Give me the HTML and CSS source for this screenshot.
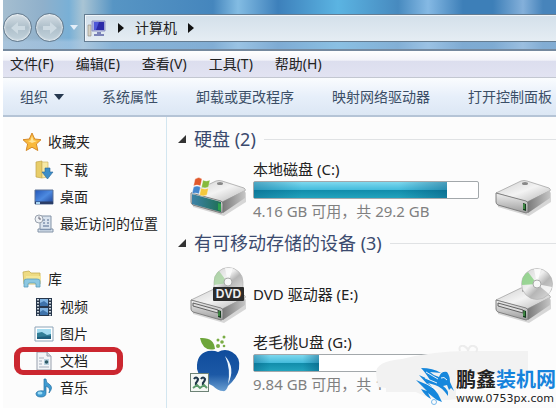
FILE: index.html
```html
<!DOCTYPE html>
<html lang="zh-CN">
<head>
  <meta charset="UTF-8">
  <meta name="viewport" content="width=device-width, initial-scale=1.0">
  <title>计算机</title>
  <link rel="stylesheet" href="styles.css">
</head>
<body>
  <!-- Shared shapes -->
  <svg class="defs" aria-hidden="true">
    <defs>
      <linearGradient id="metalTop" x1="0" y1="0" x2="1" y2="1">
        <stop offset="0" stop-color="#cfcfcf"/>
        <stop offset="0.5" stop-color="#f3f3f3"/>
        <stop offset="1" stop-color="#b5b5b5"/>
      </linearGradient>
      <linearGradient id="metalSide" x1="0" y1="0" x2="1" y2="0">
        <stop offset="0" stop-color="#777"/>
        <stop offset="1" stop-color="#c4c4c4"/>
      </linearGradient>
      <linearGradient id="metalFront" x1="0" y1="0" x2="0" y2="1">
        <stop offset="0" stop-color="#f1f1f1"/>
        <stop offset="1" stop-color="#9c9c9c"/>
      </linearGradient>
      <linearGradient id="tealFront" x1="0" y1="0" x2="1" y2="0">
        <stop offset="0" stop-color="#3c82a8"/>
        <stop offset="1" stop-color="#1f6f55"/>
      </linearGradient>
      <linearGradient id="disc" x1="0" y1="0" x2="1" y2="1">
        <stop offset="0" stop-color="#d0d0d0"/>
        <stop offset="0.4" stop-color="#f0f0f0"/>
        <stop offset="0.6" stop-color="#b6b6b6"/>
        <stop offset="1" stop-color="#e0e0e0"/>
      </linearGradient>
      <linearGradient id="peach" x1="0" y1="0" x2="0" y2="1">
        <stop offset="0" stop-color="#0f4c9c"/>
        <stop offset="0.6" stop-color="#1c59a6"/>
        <stop offset="1" stop-color="#6a9fd2"/>
      </linearGradient>
      <linearGradient id="screen" x1="0" y1="0" x2="1" y2="1">
        <stop offset="0" stop-color="#2457b8"/>
        <stop offset="0.5" stop-color="#4d8ae0"/>
        <stop offset="1" stop-color="#1c3f92"/>
      </linearGradient>
      <g id="drive">
        <path d="M2 19L3 30L34 39L56 25V15L34 30Z" fill="#000" opacity="0.15"/>
        <path d="M1 16L26 4Q29 3 32 4L54 11Q56 12 55 14L32 25Z" fill="url(#metalTop)" stroke="#a6a6a6" stroke-width="0.8"/>
        <path d="M32 25L55 13V21L33 36Z" fill="url(#metalSide)"/>
        <path d="M1 16L31 24Q33 25 33 27V34Q33 36 31 36L3 28Q1 27 1 25Z" fill="url(#metalFront)" stroke="#777" stroke-width="0.9"/>
        <ellipse cx="30" cy="6.500" rx="3" ry="1.500" fill="#888"/>
        <path d="M28 26L31 27V34L28 33Z" fill="#163d1e"/>
        <path d="M29 27V32" stroke="#63cf65"/>
      </g>
    </defs>
  </svg>

  <div class="window">
    <header class="address-row">
      <button class="nav-btn" aria-label="后退">
        <svg width="18" height="18" viewBox="0 0 18 18"><path d="M2 9L9 3V7H16V11H9V15Z"/></svg>
      </button>
      <button class="nav-btn" aria-label="前进">
        <svg width="18" height="18" viewBox="0 0 18 18"><path d="M16 9L9 3V7H2V11H9V15Z"/></svg>
      </button>
      <button class="history-btn" aria-label="最近浏览">
        <svg width="8" height="5" viewBox="0 0 8 5"><path d="M0 0H8L4 5Z" fill="#e4eef8"/></svg>
      </button>
      <nav class="address">
        <svg width="20" height="20" viewBox="0 0 20 20">
          <path d="M1 7H4V18H1Z" fill="#d6d2c4" stroke="#8d8a80" stroke-width="0.6"/>
          <path d="M5 3H18V13H5Z" fill="#a9aee0" stroke="#8f93c4"/>
          <path d="M7 4H17V12H7Z" fill="#2b2aa8"/>
          <path d="M7 4H12L9 12H7Z" fill="#4f57d8"/>
          <path d="M10 14H14V16H17V18H7V16H10Z" fill="#7b83b8"/>
        </svg>
        <svg width="6" height="10" viewBox="0 0 6 10"><path d="M0 0L6 5L0 10Z" fill="#111"/></svg>
        <a href="#">计算机</a>
        <svg width="6" height="10" viewBox="0 0 6 10"><path d="M0 0L6 5L0 10Z" fill="#111"/></svg>
      </nav>
    </header>

    <div class="menubar">
      <button>文件(F)</button>
      <button>编辑(E)</button>
      <button>查看(V)</button>
      <button>工具(T)</button>
      <button>帮助(H)</button>
    </div>

    <div class="toolbar">
      <button>组织 <svg width="10" height="6" viewBox="0 0 10 6"><path d="M0 0H10L5 6Z" fill="#26384f"/></svg></button>
      <button>系统属性</button>
      <button>卸载或更改程序</button>
      <button>映射网络驱动器</button>
      <button>打开控制面板</button>
    </div>

    <div class="body">
      <nav class="sidebar">
        <div class="group">
          <a class="group-title" href="#">
            <svg width="20" height="20" viewBox="0 0 20 20"><path d="M10 1L12.700 7L19 7.700L14.400 12L15.800 18.500L10 15.200L4.200 18.500L5.600 12L1 7.700L7.300 7Z" fill="#f9b93c" stroke="#d58a2a"/><path d="M10 4L11.500 8.500L15 9L10 11L6 9L8.500 8.500Z" fill="#ffe59a"/></svg>
            收藏夹
          </a>
          <a href="#">
            <svg width="20" height="20" viewBox="0 0 20 20"><path d="M2 2L8 1V18L2 17Z" fill="#e8cd69" stroke="#c0a44a" stroke-width="0.7"/><path d="M8 2H14V17L8 18Z" fill="#f7e9a5" stroke="#cdb566" stroke-width="0.7"/><path d="M11 8H16V12H19L13.500 19L8 12H11Z" fill="#3d8ec8" stroke="#2a6699" stroke-width="0.6"/></svg>
            下载
          </a>
          <a href="#">
            <svg width="20" height="20" viewBox="0 0 20 20"><path d="M1 3H19V17H1Z" fill="url(#screen)" stroke="#5d7296"/><path d="M1 14.500H19V17H1Z" fill="#2b3d66"/><path d="M2 15H6V17H2Z" fill="#a9d4f0"/></svg>
            桌面
          </a>
          <a href="#">
            <svg width="20" height="20" viewBox="0 0 20 20"><path d="M6 2H17V15H19V18H4V15H6Z" fill="#d9e3ee" stroke="#8292a6"/><path d="M9 6H11M13 6H15M9 9H11M13 9H15M9 12H15M6 15.500H17" stroke="#7f93ae" stroke-width="1.500"/><circle cx="5" cy="5" r="4" fill="#eef1f5" stroke="#99a2ae"/><path d="M5 2.500V5H7" fill="none" stroke="#667"/></svg>
            最近访问的位置
          </a>
        </div>
        <div class="group">
          <a class="group-title" href="#">
            <svg width="20" height="20" viewBox="0 0 20 20"><path d="M1 3L7 2L9 4H18V15H2Z" fill="#eedb82" stroke="#c5ad52" stroke-width="0.8"/><path d="M4 7H19L18 15H3Z" fill="#f5e795"/><path d="M2 12Q2 10 5 10H15Q18 10 18 12V18H14V15Q14 14 12 14H8Q6 14 6 15V18H2Z" fill="#8cc8e2" stroke="#5a9dbd" stroke-width="0.8"/></svg>
            库
          </a>
          <a href="#">
            <svg width="20" height="20" viewBox="0 0 20 20"><path d="M2 1H18V19H2Z" fill="#27364a"/><path d="M6 2H14V9H6ZM6 11H14V18H6Z" fill="#7fb3e2"/><path d="M6 6L10 4L14 7V9H6ZM6 15L9 13L14 16V18H6Z" fill="#3e73ab"/><path d="M4 2V19M16 2V19" stroke="#dfe8f0" stroke-width="1.800" stroke-dasharray="1.500 1.500"/></svg>
            视频
          </a>
          <a href="#">
            <svg width="20" height="20" viewBox="0 0 20 20"><path d="M1 3H19V17H1Z" fill="#fff" stroke="#8da4b8"/><path d="M3 5H17V15H3Z" fill="#a5dcf1"/><path d="M3 9L8 8L13 11L17 10V15H3Z" fill="#327f98"/><path d="M3 13L17 12V15H3Z" fill="#1e5f7e"/></svg>
            图片
          </a>
          <a class="marked" href="#">
            <svg width="20" height="20" viewBox="0 0 20 20"><path d="M3 1H13L17 5V19H3Z" fill="#f3f5f8" stroke="#98a0ad"/><path d="M13 1V5H17" fill="#d2d7df" stroke="#98a0ad"/><path d="M5 7H10M5 10H8M5 13H8M5 16H15" stroke="#a5afbd"/><path d="M10 8H15V14H10Z" fill="#b9d1e0"/><circle cx="12.500" cy="11" r="1.800" fill="#2e5a66"/></svg>
            文档
          </a>
          <a href="#">
            <svg width="20" height="20" viewBox="0 0 20 20"><path d="M10 1H12Q12 5 15 6Q20 9 15 15Q17 10 12 8V15Q12 19 7 19Q2 19 2 15.500Q3 12 10 13Z" fill="#3f9bd2" stroke="#246d9f" stroke-width="0.7"/><ellipse cx="6" cy="15" rx="2.500" ry="1.500" fill="#9bdcf5"/></svg>
            音乐
          </a>
        </div>
      </nav>

      <main class="content">
        <h2 class="section-title">
          <svg width="8" height="8" viewBox="0 0 8 8"><path d="M8 0V8H0Z" fill="#333"/></svg>
          硬盘 (2)
        </h2>
        <div class="tiles">
          <div class="tile">
            <svg class="tile-icon" width="58" height="58" viewBox="0 0 58 58">
              <g transform="translate(0 16)">
                <use href="#drive"/>
                <path d="M2 17L31 25V35L2 27Z" fill="url(#tealFront)"/>
                <path d="M28 26L31 27V34L28 33Z" fill="#2ea14d"/>
                <g stroke="#fff" stroke-width="0.400">
                  <path d="M5 2Q9 -1 12 2L10.500 9Q7 7 3.500 9Z" fill="#e0592c"/>
                  <path d="M13 3Q16 5 20 3L18.500 10Q15 12 11.500 10Z" fill="#86ba3d"/>
                  <path d="M3.500 10Q7 8 10.500 10L9 17Q5 15 2 17Z" fill="#4387ce"/>
                  <path d="M11 11Q15 13 18.500 11L17 18Q13 20 9.500 18Z" fill="#f4c83c"/>
                </g>
              </g>
            </svg>
            <div class="tile-info">
              <div class="tile-name">本地磁盘 (C:)</div>
              <div class="bar" role="meter" aria-label="本地磁盘 (C:)" aria-valuenow="86"><div class="bar-fill" style="width: 86%"></div></div>
              <div class="tile-caption">4.16 GB 可用，共 29.2 GB</div>
            </div>
          </div>
          <div class="tile">
            <svg class="tile-icon" width="58" height="58" viewBox="0 0 58 58"><use href="#drive" y="16"/></svg>
          </div>
        </div>

        <h2 class="section-title">
          <svg width="8" height="8" viewBox="0 0 8 8"><path d="M8 0V8H0Z" fill="#333"/></svg>
          有可移动存储的设备 (3)
        </h2>
        <div class="tiles">
          <div class="tile">
            <svg class="tile-icon" width="58" height="58" viewBox="0 0 58 58">
              <use href="#drive" y="19"/>
              <path d="M3 38L28 45V48L3 41Z" fill="#ddd" stroke="#444" stroke-width="0.800"/>
              <path d="M24 26V17A14.500 14.500 0 0 1 53 17V26Z" fill="url(#disc)" stroke="#b5b5b5" stroke-width="0.700"/>
              <path d="M38 18L24 20Q23 10 29 6Z" fill="#9ccf94" opacity="0.700"/>
              <path d="M38 18L35 3L43 3Z" fill="#fff" opacity="0.700"/>
              <circle cx="38" cy="17" r="4" fill="#f7f7f7" stroke="#aaa"/>
              <rect x="23" y="22" width="31" height="14" rx="1" fill="#2b2b2b"/>
              <text class="dvd-label" x="38.500" y="33" text-anchor="middle">DVD</text>
            </svg>
            <div class="tile-info">
              <div class="tile-name">DVD 驱动器 (E:)</div>
            </div>
          </div>
          <div class="tile">
            <svg class="tile-icon" width="58" height="58" viewBox="0 0 58 58">
              <use href="#drive" y="19"/>
              <path d="M3 38L28 45V48L3 41Z" fill="#ddd" stroke="#444" stroke-width="0.800"/>
              <circle cx="42" cy="19" r="15.500" fill="url(#disc)" stroke="#b5b5b5" stroke-width="0.700"/>
              <path d="M42 19L27 20Q26 11 33 7Z" fill="#86cf80" opacity="0.800"/>
              <path d="M42 19L39 4L46 4ZM42 19L57 22L54 29Z" fill="#fff" opacity="0.800"/>
              <circle cx="42" cy="19" r="4" fill="#f7f7f7" stroke="#aaa"/>
            </svg>
          </div>
          <div class="tile">
            <svg class="tile-icon" width="58" height="58" viewBox="0 0 58 58">
              <path d="M10 4Q24 3 25 15Q13 18 10 4Z" fill="#6da53a"/>
              <g fill="#7aad45"><circle cx="28" cy="12" r="2"/><circle cx="28" cy="6" r="1.500"/><circle cx="32" cy="8" r="1.800"/><circle cx="34" cy="3" r="1.500"/><circle cx="34" cy="12" r="1.300"/></g>
              <path d="M28 18Q35 14 42 18Q51 23 49 35Q47 44 38 52Q36 58 33 57Q28 57 23 52Q9 46 7 35Q6 20 18 17Q24 16 28 18Z" fill="url(#peach)"/>
              <path d="M35 22Q46 34 38 50Q41 35 35 22Z" fill="#eef6fd"/>
              <rect x="0.500" y="39.500" width="18" height="18" fill="#f4f8f4" stroke="#6d8276"/>
              <path d="M4 45Q6 42 8 45Q8 47 6 49V51M11 45Q13 42 15 45Q15 47 13 49V51" fill="none" stroke="#20384a" stroke-width="2.200"/>
              <path d="M3 54L7 51L10 54L14 51L17 54" fill="none" stroke="#5c9b6c" stroke-width="2"/>
            </svg>
            <div class="tile-info">
              <div class="tile-name">老毛桃U盘 (G:)</div>
              <div class="bar" role="meter" aria-label="老毛桃U盘 (G:)" aria-valuenow="29"><div class="bar-fill" style="width: 29%"></div></div>
              <div class="tile-caption">9.84 GB 可用，共 1</div>
            </div>
          </div>
        </div>
      </main>
    </div>

    <!-- Site stamp over the bottom corner -->
    <div class="stamp">
      <svg class="stamp-cloud" width="180" height="64" viewBox="0 0 180 64">
        <path d="M0 28Q0 16 26 14Q58 6 92 6H152V30H80V54Q60 58 40 47H10V43L2 42Z" fill="#f2f2f2"/>
        <path d="M84 6Q82 0 88 1Q92 3 92 6Q93 0 98 1Q103 3 100 7" fill="none" stroke="#ececec" stroke-width="2"/>
      </svg>
      <svg width="40" height="38" viewBox="0 0 40 38">
        <path d="M6 1Q18 1 26 6L15 5Q19 9 24 10Q26 4 32 5Q35 9 35 15L39 24L36 21L34 23L32 18L28 19Q34 23 33 29Q27 20 20 18L13 16Q19 21 23 27L27 35Q22 34 18 30L13 26L16 32Q10 29 6 22L12 24L1 13L13 18L4 8L15 13Q10 5 6 1Z" fill="#1687dc"/>
        <path d="M11 5L23 12M10 11L22 16M12 17L23 24M26 11Q29 9 32 13" stroke="#fff" stroke-width="0.900" fill="none"/>
        <circle cx="19" cy="35" r="2.500" fill="none" stroke="#78b9ea"/>
      </svg>
      <div class="stamp-text">
        <div class="stamp-name">鹏鑫<span>装机网</span></div>
        <div class="stamp-url">www.0753px.com</div>
      </div>
    </div>
  </div>
</body>
</html>
```

FILE: styles.css
```css
*, *::before, *::after {
  box-sizing: border-box;
}

body {
  margin: 0;
  padding-left: 3px;
  background: #fff;
  font-family: "Noto Sans", "Noto Sans CJK SC", sans-serif;
  font-size: 14px;
  line-height: 20px;
  color: #222;
}

button {
  margin: 0;
  padding: 0;
  border: none;
  background: none;
  font: inherit;
  color: inherit;
  white-space: nowrap;
  cursor: pointer;
}

a {
  color: inherit;
  text-decoration: none;
}

svg {
  flex: none;
}

.defs {
  position: absolute;
  width: 0;
  height: 0;
}

.window {
  position: relative;
  display: flex;
  flex-direction: column;
  height: 100vh;
  overflow: hidden;
  background: #fcfcfc;
}

/* Address row */
.address-row {
  display: flex;
  align-items: center;
  gap: 3px;
  flex: none;
  height: 51px;
  padding-top: 6px;
  border-bottom: 2px solid #75899e;
  background:
    linear-gradient(to bottom, transparent 38px, rgba(170, 200, 228, 0.6) 42px),
    linear-gradient(to right, #a5bed0 0, #8fb0cb 40px, #79b0d6 66px, #a9c4d4 80px, #5795c4 110px, #4586bd 210px, #83bce3 235px, #3d80bb 275px, #5bb4e2 335px, #478abf 395px, #85b9e4 425px, #3d7fb8 460px, #3d7fb8 490px, #84b0da 520px, #4784bb 540px);
}

.nav-btn {
  display: flex;
  align-items: center;
  justify-content: center;
  width: 29px;
  height: 29px;
  border: 1px solid #61788c;
  border-radius: 50%;
  background: linear-gradient(to bottom, #d5dfe6, #aebfca 50%, #c3d3dd);
  box-shadow: inset 0 0 2px 1px rgba(255, 255, 255, 0.6);
}

.nav-btn path {
  fill: #cddae2;
}

.history-btn {
  display: flex;
  justify-content: center;
  width: 14px;
}

.address {
  display: flex;
  align-items: center;
  flex: 1;
  gap: 11px;
  height: 28px;
  padding-left: 2px;
  border: 1px solid #657d92;
  border-right: none;
  background: linear-gradient(to bottom, #d3e0ea, #e5edf3);
  box-shadow: inset 1px 1px 0 #f1f6fa;
}

/* Menu and command bars */
.menubar {
  display: flex;
  align-items: center;
  gap: 22px;
  flex: none;
  height: 27px;
  padding-left: 7px;
  border-bottom: 1px solid #c3c7d1;
  background: linear-gradient(to bottom, #fff, #f2f3f9 35%, #dcdeee 40%, #e2e3f2);
}

.toolbar {
  display: flex;
  align-items: center;
  gap: 38px;
  flex: none;
  height: 39px;
  padding-left: 17px;
  border-bottom: 2px solid #b5c4d6;
  background: linear-gradient(to bottom, #fafcfe, #e7effa 50%, #dce7f4);
  color: #3b4e66;
}

.toolbar button {
  display: flex;
  align-items: center;
  gap: 6px;
}

.body {
  display: flex;
  flex: 1;
  min-height: 0;
}

/* Sidebar */
.sidebar {
  flex: none;
  width: 164px;
  padding-top: 10px;
  border-right: 1px solid #d3e6f0;
}

.group {
  margin-bottom: 27px;
}

.group a {
  position: relative;
  display: flex;
  align-items: center;
  gap: 6px;
  height: 27px;
  padding-left: 31px;
  white-space: nowrap;
}

.group .group-title {
  height: 29px;
  padding-left: 19px;
}

.group .marked::after {
  content: "";
  position: absolute;
  top: 0;
  left: 11px;
  width: 109px;
  height: 28px;
  border: 6px solid #cb2730;
  border-width: 5px 6px;
  border-radius: 9px;
}

/* Drives */
.content {
  flex: 1;
  min-width: 0;
  padding: 10px 0 0 11px;
  overflow: hidden;
}

.section-title {
  display: flex;
  align-items: center;
  gap: 8px;
  margin: 0 0 8px;
  font-size: 18px;
  font-weight: 400;
  line-height: 24px;
  color: #3b4a6e;
  white-space: nowrap;
}

.section-title::after {
  content: "";
  flex: 1;
  height: 1px;
  background: #e0e2e4;
}

.tiles {
  display: grid;
  grid-template-columns: repeat(2, 305px);
  row-gap: 7px;
  margin-bottom: 10px;
  padding-left: 12px;
}

.tile {
  display: flex;
  align-items: center;
  gap: 5px;
  height: 62px;
}

.tile-info {
  display: flex;
  flex-direction: column;
  gap: 2px;
  width: 226px;
  font-size: 15px;
}

.tile-caption {
  color: #808080;
}

.bar {
  height: 18px;
  border: 1px solid #a3a8ab;
  border-radius: 2px;
  background: #fff;
}

.bar-fill {
  height: 100%;
  background:
    linear-gradient(to right, rgba(0, 80, 120, 0.35), transparent 25%, transparent 75%, rgba(0, 70, 110, 0.4)),
    linear-gradient(to bottom, #7ed8ee, #45bcdc 48%, #128dab 52%, #22a3bd);
}

.dvd-label {
  font-family: "Liberation Sans", sans-serif;
  font-size: 12px;
  font-weight: 700;
  fill: #eee;
}

/* Stamp */
.stamp {
  position: absolute;
  right: 0;
  bottom: 2px;
  display: flex;
  align-items: center;
  gap: 1px;
}

.stamp > * {
  z-index: 1;
}

.stamp .stamp-cloud {
  position: absolute;
  right: 0;
  bottom: -3px;
  z-index: 0;
}

.stamp-name {
  font-family: "Noto Sans CJK SC", sans-serif;
  font-size: 20px;
  font-weight: 700;
  line-height: 26px;
  color: #222;
}

.stamp-name span {
  color: #1583dc;
}

.stamp-url {
  font-family: "DejaVu Sans", sans-serif;
  font-size: 11px;
  line-height: 14px;
  color: #222;
}
```
